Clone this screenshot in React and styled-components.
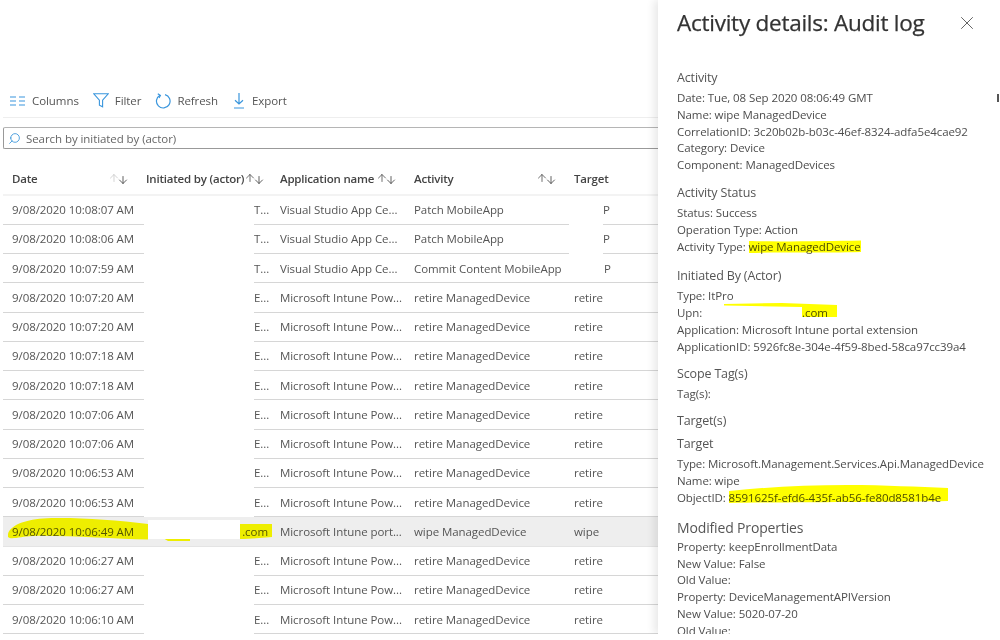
import React from 'react';
import styled, { createGlobalStyle } from 'styled-components';
import { Search, ArrowUp, ArrowDown, X } from 'lucide-react';

const Global = createGlobalStyle`
  html, body { margin: 0; padding: 0; background: #fff; }
  body { font-family: "Open Sans", "Noto Sans", sans-serif; color: #444; overflow: hidden; }
`;

const Page = styled.div`
  width: 1000px; height: 634px; display: flex; overflow: hidden; background: #fff; filter: blur(0.25px);
`;
const Main = styled.main`
  width: 658px; flex: none; padding: 87px 0 0 3px; box-sizing: border-box; position: relative;
`;
const Toolbar = styled.div`
  height: 27px; display: flex; align-items: center; gap: 14px; padding: 0 0 3px 7px;
  border-bottom: 1px solid #eee; margin-bottom: 9px;
`;
const ToolButton = styled.div`
  display: flex; align-items: center; gap: 6px; font-size: 11.5px; color: #555; letter-spacing: -0.07px;
  svg { flex: none; }
`;
const SearchBox = styled.div`
  height: 20px; display: flex; align-items: center; gap: 5px; padding-left: 4px;
  border: 1px solid #999; border-top-color: #b5b5b5; border-right: none; border-radius: 2px 0 0 2px;
  font-size: 11.5px; color: #666; letter-spacing: -0.07px;
  svg { color: #2f8fd8; transform: scaleX(-1); }
`;
const Head = styled.div`
  display: grid; grid-template-columns: 143px 134px 134px 160px 84px; height: 31px; margin-top: 13.5px;
  border-bottom: 2px solid #f3f3f3; align-items: center; font-size: 11.5px; font-weight: 600; color: #444; letter-spacing: -0.2px;
`;
const HeadCell = styled.div`
  display: flex; align-items: center; justify-content: space-between; padding: 0 17px 0 ${p => p.$lead ?? 0}px; white-space: nowrap;
`;
const Sort = styled.span`
  display: flex; align-items: center; color: #444;
  svg:first-child { color: ${p => (p.$dim ? '#ccc' : '#555')}; margin-right: -3px; }
  svg:last-child { margin-top: 3px; }
`;
const Row = styled.div`
  display: grid; grid-template-columns: 141px 110px 26px 134px 155px 34px 55px; height: 29.25px; position: relative;
  font-size: 11.5px; color: #555; letter-spacing: -0.07px; background: ${p => (p.$selected ? '#eeeeee' : 'transparent')};
`;
const Cell = styled.div`
  display: flex; align-items: center; justify-content: ${p => (p.$spread ? 'space-between' : 'flex-start')};
  padding: 0 ${p => p.$padEnd ?? 0}px 0 ${p => p.$pad ?? 0}px; white-space: nowrap; overflow: hidden;
  box-sizing: border-box; grid-column: span ${p => p.$span ?? 1};
  border-bottom: 1px solid ${p => (p.$selected ? '#e4e4e4' : p.$bare ? 'transparent' : '#d6d6d6')};
`;
const Mask = styled.span`
  position: absolute; left: 145px; top: 3px; width: 92px; height: 19px; background: #fff;
`;
const Marker = styled.svg`
  position: absolute; left: 0; top: 0; overflow: visible; mix-blend-mode: multiply; pointer-events: none;
`;
const Panel = styled.aside`
  width: 342px; flex: none; height: 100%; background: #fff; box-shadow: -4px 0 8px rgba(0,0,0,.09);
  padding: 0 0 0 19px; box-sizing: border-box; position: relative; overflow: hidden;
`;
const TitleBar = styled.div`
  height: 45px; display: flex; align-items: center; justify-content: space-between; padding: 0 22px 0 0;
  svg { color: #555; flex: none; }
`;
const Title = styled.h1`
  margin: 0; font-size: 22.5px; font-weight: 400; color: #333; letter-spacing: -0.25px; -webkit-text-stroke: .25px #333; white-space: nowrap;
`;
const Section = styled.section`
  margin-top: ${p => p.$top}px;
`;
const SectionTitle = styled.div`
  font-size: ${p => p.$size ?? 12.5}px; line-height: 17px; margin-bottom: ${p => p.$gap ?? 4}px; color: #555; letter-spacing: -0.15px;
`;
const Line = styled.div`
  font-size: 11.5px; line-height: 16.8px; color: #4d4d4d; letter-spacing: -0.09px; white-space: nowrap; position: relative;
`;
const Blank = styled.span`
  display: inline-block; width: 97px;
`;
const Edge = styled.div`
  position: absolute; right: 1px; top: 94px; width: 2px; height: 8px; background: #555;
`;

const ColumnsIcon = () => (
  <svg width="16" height="10" viewBox="0 0 16 10" fill="none" stroke="#3a96dd" strokeWidth="1.2">
    <path d="M0 1h6M0 5h6M0 9h6M9 1h6M9 5h6M9 9h6" />
  </svg>
);
const FilterIcon = () => (
  <svg width="16" height="15" viewBox="0 0 16 15" fill="none" stroke="#3a96dd" strokeWidth="1.1">
    <path d="M.8 .8h14.4L9.6 7.2v6.6l-3.2-1.6v-5z" />
  </svg>
);
const RefreshIcon = () => (
  <svg width="16" height="16" viewBox="0 0 16 16" fill="none" stroke="#3a96dd" strokeWidth="1.2">
    <path d="M5 2.2A6.8 6.8 0 1 0 10 1.6" />
    <path d="M2.8 .8 5.4 2.4 4 5" />
  </svg>
);
const ExportIcon = () => (
  <svg width="14" height="16" viewBox="0 0 14 16" fill="none" stroke="#3a96dd" strokeWidth="1.2">
    <path d="M7 0v11M3 7.2 7 11l4-3.8M2 15h10" />
  </svg>
);

const SortIcon = ({ dim }) => (
  <Sort $dim={dim}>
    <ArrowUp size={12} strokeWidth={1.7} />
    <ArrowDown size={12} strokeWidth={1.7} />
  </Sort>
);

const rows = [
  ['9/08/2020 10:08:07 AM', 'T...', 'Visual Studio App Ce...', 'Patch MobileApp', 'P'],
  ['9/08/2020 10:08:06 AM', 'T...', 'Visual Studio App Ce...', 'Patch MobileApp', 'P'],
  ['9/08/2020 10:07:59 AM', 'T...', 'Visual Studio App Ce...', 'Commit Content MobileApp', 'P'],
  ['9/08/2020 10:07:20 AM', 'E...', 'Microsoft Intune Pow...', 'retire ManagedDevice', 'retire'],
  ['9/08/2020 10:07:20 AM', 'E...', 'Microsoft Intune Pow...', 'retire ManagedDevice', 'retire'],
  ['9/08/2020 10:07:18 AM', 'E...', 'Microsoft Intune Pow...', 'retire ManagedDevice', 'retire'],
  ['9/08/2020 10:07:18 AM', 'E...', 'Microsoft Intune Pow...', 'retire ManagedDevice', 'retire'],
  ['9/08/2020 10:07:06 AM', 'E...', 'Microsoft Intune Pow...', 'retire ManagedDevice', 'retire'],
  ['9/08/2020 10:07:06 AM', 'E...', 'Microsoft Intune Pow...', 'retire ManagedDevice', 'retire'],
  ['9/08/2020 10:06:53 AM', 'E...', 'Microsoft Intune Pow...', 'retire ManagedDevice', 'retire'],
  ['9/08/2020 10:06:53 AM', 'E...', 'Microsoft Intune Pow...', 'retire ManagedDevice', 'retire'],
  ['9/08/2020 10:06:49 AM', '.com', 'Microsoft Intune port...', 'wipe ManagedDevice', 'wipe'],
  ['9/08/2020 10:06:27 AM', 'E...', 'Microsoft Intune Pow...', 'retire ManagedDevice', 'retire'],
  ['9/08/2020 10:06:27 AM', 'E...', 'Microsoft Intune Pow...', 'retire ManagedDevice', 'retire'],
  ['9/08/2020 10:06:10 AM', 'E...', 'Microsoft Intune Pow...', 'retire ManagedDevice', 'retire'],
];

const TableRow = ({ r, index }) => {
  const [date, tail, app, activity, target] = r;
  const selected = index === 11;
  return (
    <Row $selected={selected}>
      <Cell $pad={9} $selected={selected}>{date}</Cell>
      {selected ? (
        <Cell $span={2} $spread $pad={5} $padEnd={12} $selected>
          <span>T</span><span>{tail}</span>
        </Cell>
      ) : (
        <>
          <Cell $bare />
          <Cell>{tail}</Cell>
        </>
      )}
      <Cell $selected={selected}>{app}</Cell>
      <Cell $selected={selected}>{activity}</Cell>
      {index < 2 ? (
        <>
          <Cell $bare />
          <Cell>{target}</Cell>
        </>
      ) : (
        <Cell $span={2} $pad={index === 2 ? 35 : 5} $selected={selected}>{target}</Cell>
      )}
      {selected && (
        <>
          <Marker width="280" height="30">
            <path d="M5 17 C 7 9 20 3 40 1.5 C 70 0 110 3 145 7 L 145 22.5 C 110 22 60 18 30 19 C 18 19.5 8 23 5 20 Z" fill="#ffff00" />
            <path d="M160 21 H187 L187 24 H165 Z" fill="#ffff00" />
            <path d="M237 7 H269 L269 20 C 258 21 246 22 237 22 Z" fill="#ffff00" />
          </Marker>
          <Mask />
        </>
      )}
    </Row>
  );
};

export default function App() {
  return (
    <Page>
      <Global />
      <Main>
        <Toolbar>
          <ToolButton><ColumnsIcon />Columns</ToolButton>
          <ToolButton><FilterIcon />Filter</ToolButton>
          <ToolButton><RefreshIcon />Refresh</ToolButton>
          <ToolButton><ExportIcon />Export</ToolButton>
        </Toolbar>
        <SearchBox><Search size={13} strokeWidth={1.5} />Search by initiated by (actor)</SearchBox>
        <Head>
          <HeadCell $lead={9}>Date<SortIcon dim /></HeadCell>
          <HeadCell>Initiated by (actor)<SortIcon /></HeadCell>
          <HeadCell>Application name<SortIcon /></HeadCell>
          <HeadCell>Activity<SortIcon /></HeadCell>
          <HeadCell>Target</HeadCell>
        </Head>
        {rows.map((r, i) => <TableRow key={i} r={r} index={i} />)}
      </Main>
      <Panel>
        <TitleBar>
          <Title>Activity details: Audit log</Title>
          <X size={22} strokeWidth={1} />
        </TitleBar>
        <Section $top={24}>
          <SectionTitle>Activity</SectionTitle>
          <Line>Date: Tue, 08 Sep 2020 08:06:49 GMT</Line>
          <Line>Name: wipe ManagedDevice</Line>
          <Line>CorrelationID: 3c20b02b-b03c-46ef-8324-adfa5e4cae92</Line>
          <Line>Category: Device</Line>
          <Line>Component: ManagedDevices</Line>
        </Section>
        <Section $top={10}>
          <SectionTitle>Activity Status</SectionTitle>
          <Line>Status: Success</Line>
          <Line>Operation Type: Action</Line>
          <Line>
            Activity Type: wipe ManagedDevice
            <Marker width="190" height="17">
              <path d="M72 2 C 100 3 150 2 184 1.5 L 184 13 C 150 14 100 13 72 14 Z" fill="#ffff00" />
            </Marker>
          </Line>
        </Section>
        <Section $top={12}>
          <SectionTitle>Initiated By (Actor)</SectionTitle>
          <Line>Type: ItPro</Line>
          <Line>
            Upn: <Blank />.com
            <Marker width="165" height="17">
              <path d="M47 -1 L105 -2 L160 0 L160 12 L125 12 L125 2 L47 0.5 Z" fill="#ffff00" />
            </Marker>
          </Line>
          <Line>Application: Microsoft Intune portal extension</Line>
          <Line>ApplicationID: 5926fc8e-304e-4f59-8bed-58ca97cc39a4</Line>
        </Section>
        <Section $top={9}>
          <SectionTitle>Scope Tag(s)</SectionTitle>
          <Line>Tag(s):</Line>
        </Section>
        <Section $top={10}>
          <SectionTitle>Target(s)</SectionTitle>
        </Section>
        <Section $top={6}>
          <SectionTitle>Target</SectionTitle>
          <Line>Type: Microsoft.Management.Services.Api.ManagedDevice</Line>
          <Line>Name: wipe</Line>
          <Line>
            ObjectID: 8591625f-efd6-435f-ab56-fe80d8581b4e
            <Marker width="275" height="17">
              <path d="M52 1 C 90 -3 130 -5 170 -5 C 210 -5 240 -3 271 -2 L 271 11 C 220 12 120 12 52 13 Z" fill="#ffff00" />
            </Marker>
          </Line>
        </Section>
        <Section $top={12}>
          <SectionTitle $size={14} $gap={3}>Modified Properties</SectionTitle>
          <Line>Property: keepEnrollmentData</Line>
          <Line>New Value: False</Line>
          <Line>Old Value:</Line>
          <Line>Property: DeviceManagementAPIVersion</Line>
          <Line>New Value: 5020-07-20</Line>
          <Line>Old Value:</Line>
        </Section>
        <Edge />
      </Panel>
    </Page>
  );
}
